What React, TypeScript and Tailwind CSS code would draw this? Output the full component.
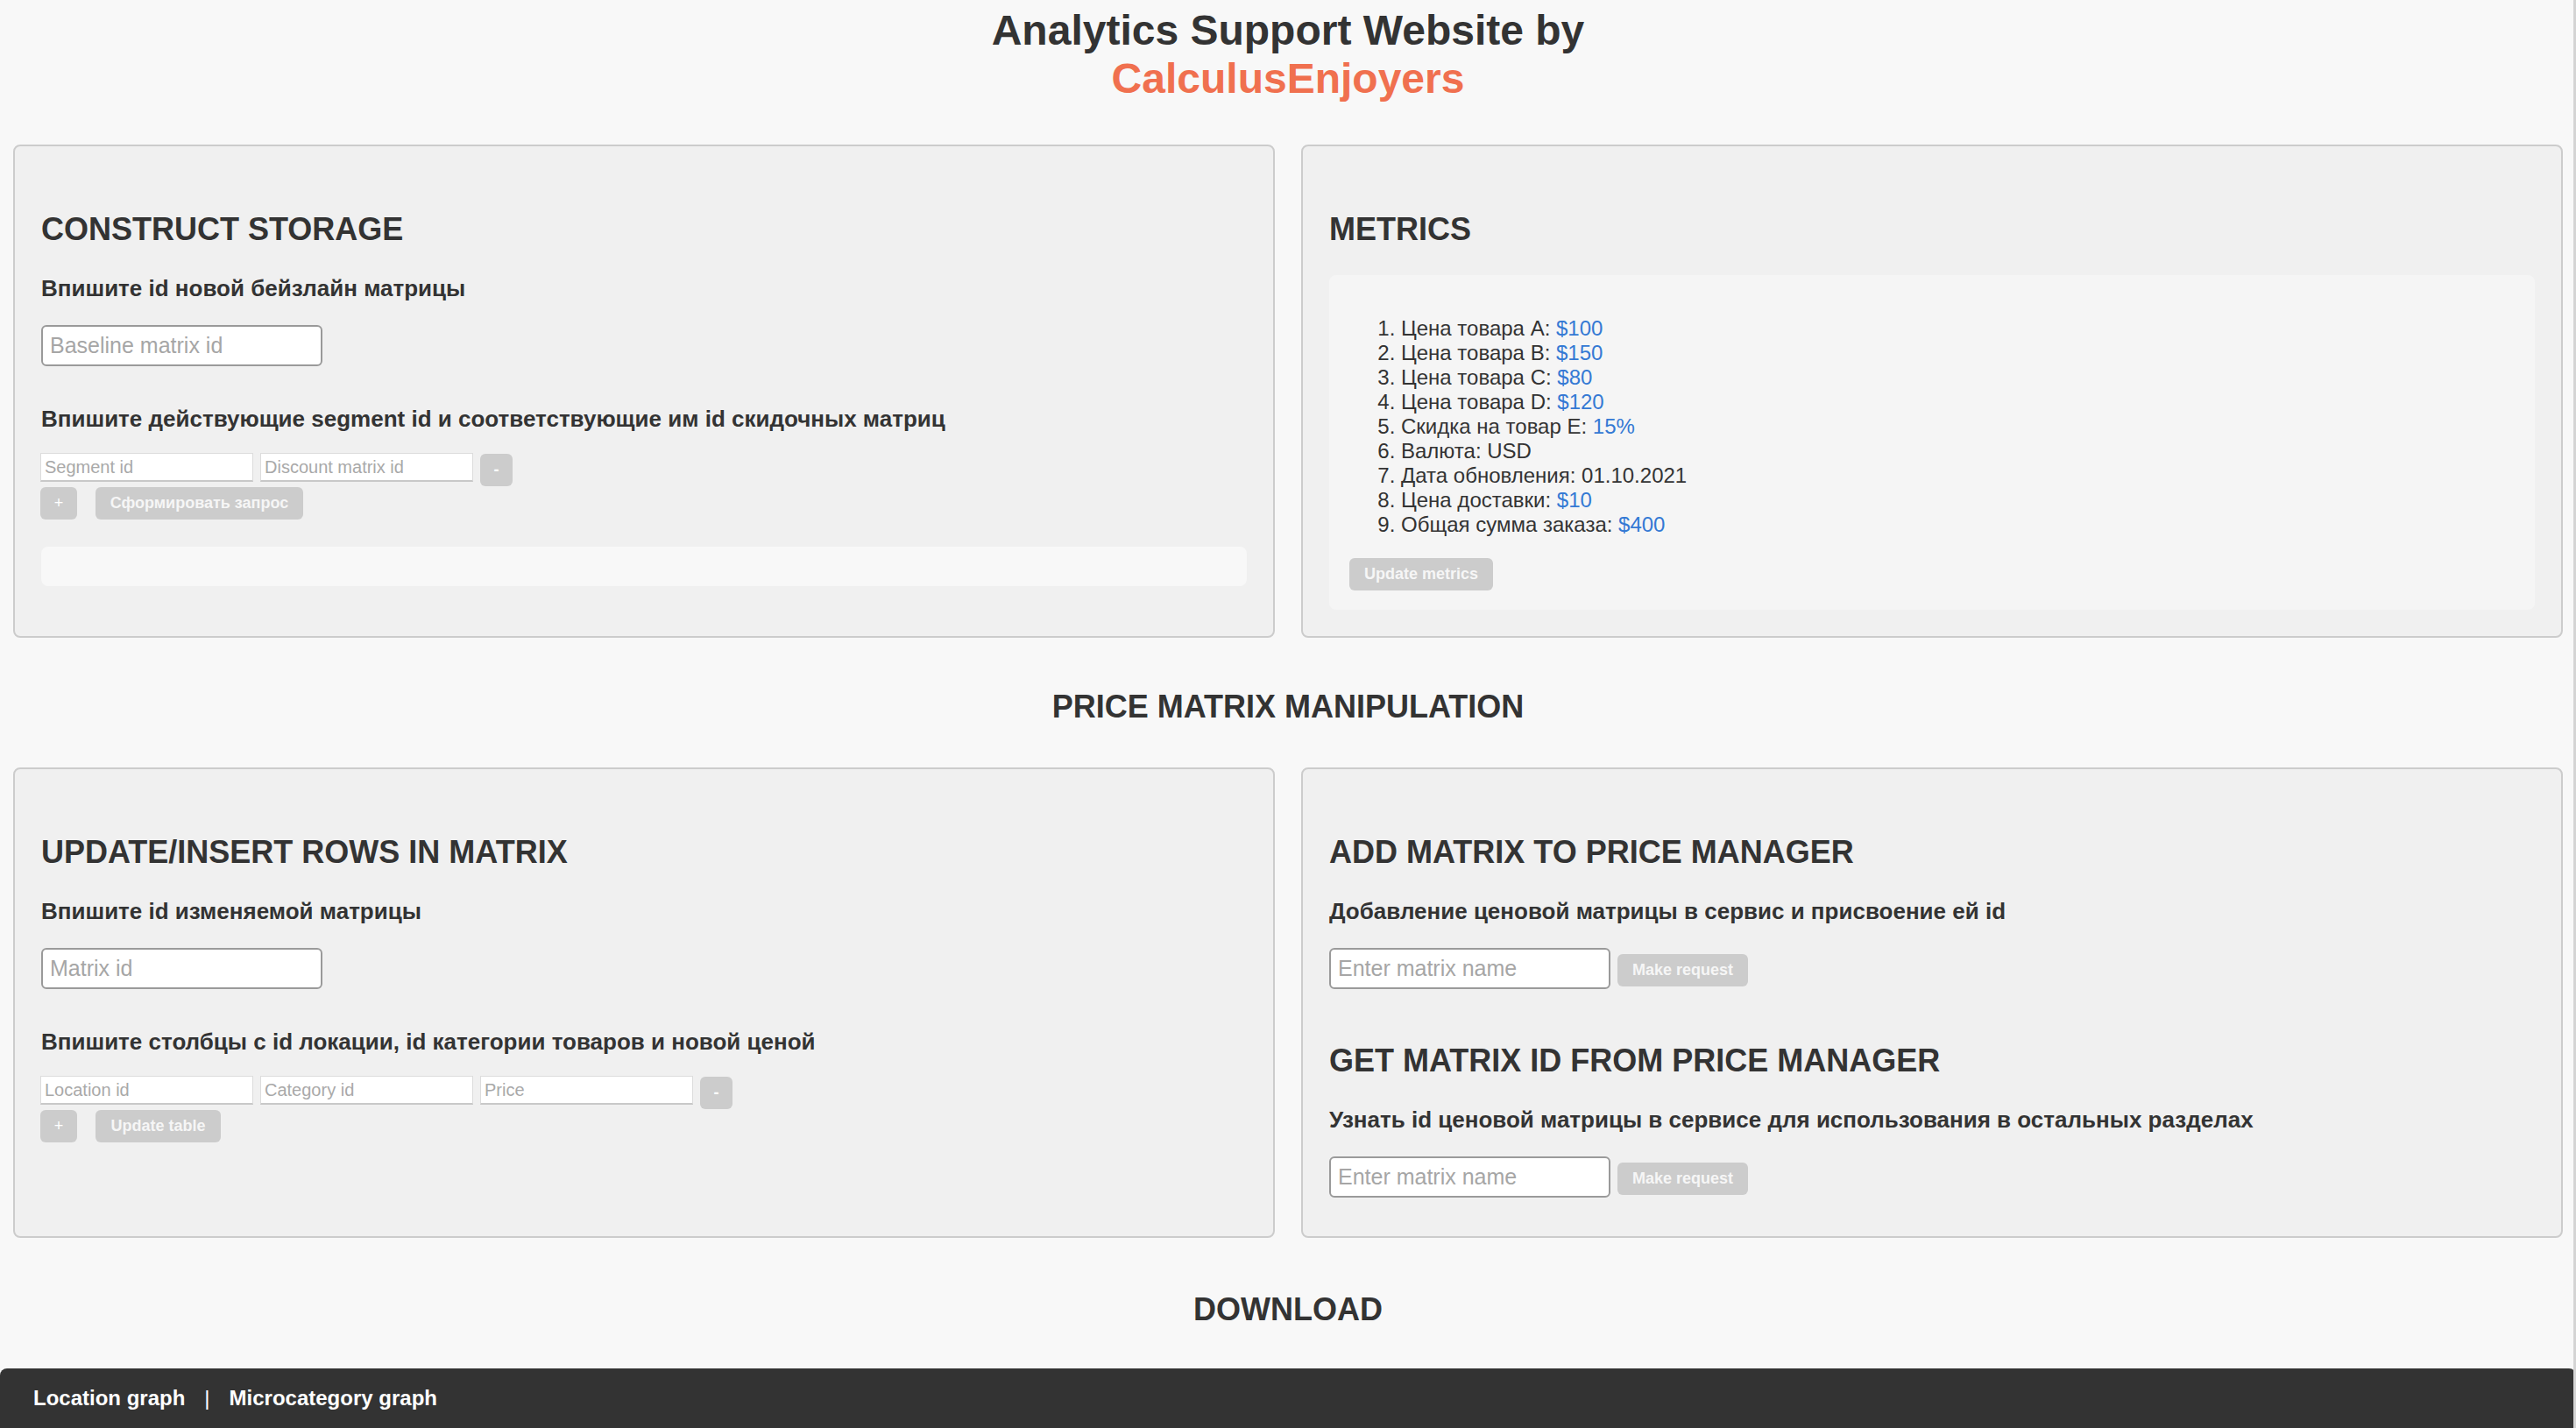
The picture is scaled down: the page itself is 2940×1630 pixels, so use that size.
import React from "react";

const SmallInput = ({ placeholder }: { placeholder: string }) => (
  <input
    placeholder={placeholder}
    className="w-[243px] h-[33px] bg-white border border-[#dcdcdc] border-b-2 border-b-[#c8c8c8] px-[4px] font-['Liberation_Sans',Arial,sans-serif] text-[20px] text-[#333] placeholder:text-[#a9a9a9] outline-none"
  />
);

const GrayButton = ({ children, className = "" }: { children: React.ReactNode; className?: string }) => (
  <button
    className={`h-[37px] rounded-[6px] bg-[#cccccc] text-[#f6f6f6] text-[18px] font-bold flex items-center justify-center ${className}`}
  >
    {children}
  </button>
);

const BigInput = ({ placeholder, w }: { placeholder: string; w: string }) => (
  <input
    placeholder={placeholder}
    className={`${w} h-[47px] bg-white border-2 border-[#9a9a9a] rounded-[6px] px-[8px] font-['Liberation_Sans',Arial,sans-serif] text-[25px] text-[#333] placeholder:text-[#a6a6a6] outline-none`}
  />
);

const Card = ({ children, className = "" }: { children: React.ReactNode; className?: string }) => (
  <div className={`rounded-[8px] border-2 border-[#cccccc] bg-[#f0f0f0] px-[30px] pt-[74px] ${className}`}>
    {children}
  </div>
);

const H2 = ({ children, className = "" }: { children: React.ReactNode; className?: string }) => (
  <h2 className={`text-[36px] font-bold leading-[41px] text-[#333] ${className}`}>{children}</h2>
);

const Label = ({ children, className = "" }: { children: React.ReactNode; className?: string }) => (
  <p className={`text-[26px] font-bold leading-[28px] text-[#333] ${className}`}>{children}</p>
);

const Blue = ({ children }: { children: React.ReactNode }) => (
  <span className="text-[#3479d4]">{children}</span>
);

export default function App() {
  return (
    <div className="min-h-screen bg-[#f8f8f8] font-['Liberation_Sans',Arial,sans-serif] text-[#333]">
      <h1 className="pt-[7px] text-center text-[48px] font-bold leading-[55px] text-[#333]">
        Analytics Support Website by
        <br />
        <span className="text-[#f0704f]">CalculusEnjoyers</span>
      </h1>

      <div className="mt-[48px] grid grid-cols-2 gap-[30px] px-[15px]">
        <Card className="pb-[30px]">
          <H2>CONSTRUCT STORAGE</H2>
          <Label className="mt-[33px]">Впишите id новой бейзлайн матрицы</Label>
          <div className="mt-[28px]">
            <BigInput placeholder="Baseline matrix id" w="w-[321px]" />
          </div>
          <Label className="mt-[46px]">
            Впишите действующие segment id и соответствующие им id скидочных матриц
          </Label>
          <div className="mt-[25px] flex items-start gap-[8px] -ml-px">
            <SmallInput placeholder="Segment id" />
            <SmallInput placeholder="Discount matrix id" />
            <GrayButton className="mt-px h-[36px] w-[37px] text-white">-</GrayButton>
          </div>
          <div className="mt-px flex gap-[21px] -ml-px">
            <GrayButton className="w-[42px] text-white font-normal">+</GrayButton>
            <GrayButton className="w-[237px]">Сформировать запрос</GrayButton>
          </div>
          <div className="mt-[31px] h-[45px] w-full rounded-[8px] bg-[#f8f8f8]" />
        </Card>

        <Card className="pb-[30px]">
          <H2>METRICS</H2>
          <div className="mt-[32px] rounded-[8px] bg-[#f5f5f5] px-[23px] pt-[24px] pb-[22px]">
            <ol className="mt-[23px] list-decimal pl-[59px] text-[24px] leading-[28px] text-[#333]">
              <li>Цена товара A: <Blue>$100</Blue></li>
              <li>Цена товара B: <Blue>$150</Blue></li>
              <li>Цена товара C: <Blue>$80</Blue></li>
              <li>Цена товара D: <Blue>$120</Blue></li>
              <li>Скидка на товар E: <Blue>15%</Blue></li>
              <li>Валюта: USD</li>
              <li>Дата обновления: 01.10.2021</li>
              <li>Цена доставки: <Blue>$10</Blue></li>
              <li>Общая сумма заказа: <Blue>$400</Blue></li>
            </ol>
            <GrayButton className="mt-[24px] w-[164px]">Update metrics</GrayButton>
          </div>
        </Card>
      </div>

      <H2 className="mt-[58px] text-center">PRICE MATRIX MANIPULATION</H2>

      <div className="mt-[49px] grid grid-cols-2 gap-[30px] px-[15px]">
        <Card className="pb-[30px]">
          <H2>UPDATE/INSERT ROWS IN MATRIX</H2>
          <Label className="mt-[33px]">Впишите id изменяемой матрицы</Label>
          <div className="mt-[28px]">
            <BigInput placeholder="Matrix id" w="w-[321px]" />
          </div>
          <Label className="mt-[46px]">
            Впишите столбцы с id локации, id категории товаров и новой ценой
          </Label>
          <div className="mt-[25px] flex items-start gap-[8px] -ml-px">
            <SmallInput placeholder="Location id" />
            <SmallInput placeholder="Category id" />
            <SmallInput placeholder="Price" />
            <GrayButton className="mt-px h-[36px] w-[37px] text-white">-</GrayButton>
          </div>
          <div className="mt-px flex gap-[21px] -ml-px">
            <GrayButton className="w-[42px] text-white font-normal">+</GrayButton>
            <GrayButton className="w-[143px]">Update table</GrayButton>
          </div>
        </Card>

        <Card className="pb-[44px]">
          <H2>ADD MATRIX TO PRICE MANAGER</H2>
          <Label className="mt-[33px]">Добавление ценовой матрицы в сервис и присвоение ей id</Label>
          <div className="mt-[28px] flex items-start gap-[8px]">
            <BigInput placeholder="Enter matrix name" w="w-[321px]" />
            <GrayButton className="mt-[7px] w-[149px]">Make request</GrayButton>
          </div>
          <H2 className="mt-[61px]">GET MATRIX ID FROM PRICE MANAGER</H2>
          <Label className="mt-[33px]">
            Узнать id ценовой матрицы в сервисе для использования в остальных разделах
          </Label>
          <div className="mt-[28px] flex items-start gap-[8px]">
            <BigInput placeholder="Enter matrix name" w="w-[321px]" />
            <GrayButton className="mt-[7px] w-[149px]">Make request</GrayButton>
          </div>
        </Card>
      </div>

      <H2 className="mt-[61px] text-center">DOWNLOAD</H2>

      <footer className="mt-[47px] flex h-[68px] items-center gap-[22px] rounded-t-[8px] bg-[#333333] pl-[38px] text-[24px] font-bold text-white">
        <span>Location graph</span>
        <span className="font-normal">|</span>
        <span>Microcategory graph</span>
      </footer>

      <div className="fixed top-0 right-0 bottom-0 w-[3px] bg-[#d4d4d4]" />
    </div>
  );
}
